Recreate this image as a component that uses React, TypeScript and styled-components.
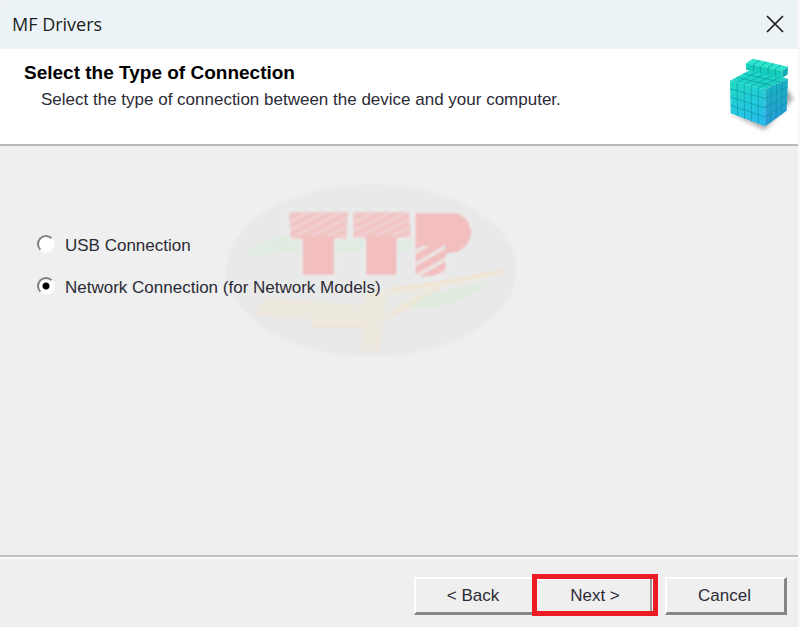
import React, { useState } from "react";
import styled, { createGlobalStyle, css } from "styled-components";

const GlobalStyle = createGlobalStyle`
  *, *::before, *::after { box-sizing: border-box; }
  html, body, #root { height: 100%; margin: 0; }
  body { background: #efefef; }
`;

const uiFont = css`
  font-family: "Liberation Sans", Arial, sans-serif;
  font-size: 17px;
  line-height: 24px;
  color: #2b2b36;
`;

const Dialog = styled.div`
  ${uiFont}
  display: flex;
  flex-direction: column;
  min-height: 100%;
  background: #efefef;
  border-right: 2px solid #f8f8f8;
  border-top-left-radius: 8px;
`;

const TitleBar = styled.header`
  display: flex;
  align-items: center;
  justify-content: space-between;
  height: 49px;
  padding: 0 11px 2px 12px;
  background: #ebf3f7;
  border-top-left-radius: 10px;
`;

const Title = styled.span`
  font-family: "Open Sans", "Noto Sans", sans-serif;
  font-size: 18px;
  color: #1c1c1c;
`;

const CloseButton = styled.button`
  display: flex;
  padding: 2px;
  border: 0;
  background: none;
  color: #1c1c1c;
`;

const Banner = styled.section`
  display: flex;
  justify-content: space-between;
  height: 97px;
  padding: 12px 0 0 24px;
  background: #fff;
  border-bottom: 2px solid #b9b9b9;
`;

const Heading = styled.h1`
  margin: 0;
  font-size: 19px;
  line-height: 24px;
  font-weight: 700;
  color: #000;
`;

const Description = styled.p`
  margin: 3px 0 0 17px;
`;

const ProductIcon = styled.svg`
  flex: none;
  margin-top: -9px;
`;

const Content = styled.main`
  display: grid;
  flex: 1;
  align-content: start;
  padding: 37px 24px 24px 37px;
`;

const Options = styled.fieldset`
  grid-area: 1 / 1;
  z-index: 1;
  display: flex;
  flex-direction: column;
  gap: 18px;
  margin: 0;
  padding: 51px 0 0;
  border: 0;
`;

const Option = styled.label`
  display: flex;
  align-items: center;
  gap: 10px;
`;

const Radio = styled.input`
  appearance: none;
  width: 18px;
  height: 18px;
  margin: 0 0 4px;
  border: 2px solid;
  border-color: #808080 #fcfcfc #fcfcfc #808080;
  border-radius: 50%;
  background: #fff;
  &:checked {
    background: radial-gradient(circle, #000 0 3px, #fff 4px);
  }
`;

const Watermark = styled.svg`
  grid-area: 1 / 1;
  margin-left: 187px;
`;

const Footer = styled.footer`
  display: flex;
  justify-content: flex-end;
  align-items: flex-start;
  height: 72px;
  padding: 20px 11px 0;
  border-top: 2px solid #c2c2c2;
  box-shadow: inset 0 2px #fafafa;
`;

const PushButton = styled.button`
  ${uiFont}
  width: 122px;
  height: 38px;
  padding: 0 2px 0 0;
  border: solid;
  border-width: 2px 3px 3px 2px;
  border-color: #fff #858585 #858585 #fff;
  background: #efefef;
`;

const BackButton = styled(PushButton)`
  width: 118px;
  border-right: 0;
`;

const NextButton = styled(PushButton)`
  width: 126px;
  height: 42px;
  margin: -3px 7px 0 0;
  padding: 2px 0 0;
  border: 5px solid #ed1c24;
  box-shadow: inset -1px 0 #fff, inset -3px 0 #999, inset 0 1px #fff;
`;

function CloseIcon() {
  return (
    <svg width="20" height="20" viewBox="0 0 20 20" fill="none" stroke="currentColor" strokeWidth="1.7">
      <path d="M2 2 18 18M18 2 2 18" />
    </svg>
  );
}

type Point = [number, number];

/* Grid lines inside a four-cornered face, given clockwise from its top-left corner. */
function faceGrid(a: Point, b: Point, c: Point, d: Point, columns: number, rows: number) {
  const at = (u: number, v: number) =>
    [0, 1]
      .map((i) => (1 - v) * ((1 - u) * a[i] + u * b[i]) + v * ((1 - u) * d[i] + u * c[i]))
      .join(",");
  let path = "";
  for (let i = 1; i < columns; i++) path += `M${at(i / columns, 0)}L${at(i / columns, 1)}`;
  for (let i = 1; i < rows; i++) path += `M${at(0, i / rows)}L${at(1, i / rows)}`;
  return path;
}

function CubeIcon() {
  return (
    <ProductIcon width="76" height="84" viewBox="0 0 228 252" aria-hidden="true">
      <defs>
        <linearGradient id="cubeTop" x1="0" y1="0" x2="1" y2="1">
          <stop offset="0" stopColor="#22dccb" />
          <stop offset="1" stopColor="#18cdbe" />
        </linearGradient>
        <linearGradient id="cubeLeft" x1="0" y1="0" x2="0.3" y2="1">
          <stop offset="0" stopColor="#1edcc0" />
          <stop offset="1" stopColor="#27bdea" />
        </linearGradient>
        <linearGradient id="cubeRight" x1="0" y1="0" x2="0.2" y2="1">
          <stop offset="0" stopColor="#16b8be" />
          <stop offset="1" stopColor="#2b98d8" />
        </linearGradient>
        <filter id="cubeShadow" x="-20%" y="-20%" width="140%" height="140%">
          <feGaussianBlur stdDeviation="7" />
        </filter>
      </defs>
      <path d="M22 182 128 234 214 140 196 110 120 200Z" fill="#777" opacity=".6" filter="url(#cubeShadow)" />
      <path d="M24 86 84 54 198 80 130 112Z" fill="url(#cubeTop)" />
      <path d="M24 86 130 112 130 223 26 184Z" fill="url(#cubeLeft)" />
      <path d="M130 112 198 80 194 176 130 223Z" fill="url(#cubeRight)" />
      <g fill="none" stroke="#0c93a4" strokeWidth="3">
        <path opacity=".6" d={faceGrid([84, 54], [198, 80], [130, 112], [24, 86], 5, 3)} />
        <path opacity=".6" d={faceGrid([24, 86], [130, 112], [130, 223], [26, 184], 5, 4)} />
        <path opacity=".7" d={faceGrid([130, 112], [198, 80], [194, 176], [130, 223], 4, 4)} />
      </g>
      <path d="M72 34 92 20 198 44 182 56Z" fill="#2ce4cc" />
      <path d="M72 34 182 56 182 78 72 53Z" fill="#14cdbb" />
      <path d="M182 56 198 44 197 67 182 78Z" fill="#12abb0" />
      <g fill="none" stroke="#0a9ba0" strokeWidth="3" opacity=".7">
        <path d={faceGrid([92, 20], [198, 44], [182, 56], [72, 34], 5, 1)} />
        <path d={faceGrid([72, 34], [182, 56], [182, 78], [72, 53], 5, 1)} />
      </g>
    </ProductIcon>
  );
}

function LogoWatermark() {
  return (
    <Watermark width="300" height="180" viewBox="40 36 900 540" aria-hidden="true">
      <defs>
        <pattern id="stripes" width="44" height="22" patternUnits="userSpaceOnUse" patternTransform="rotate(-27)">
          <rect width="44" height="22" fill="#f2c5c5" />
          <rect width="44" height="5" fill="#eedada" />
        </pattern>
        <pattern id="wideStripes" width="44" height="32" patternUnits="userSpaceOnUse" patternTransform="rotate(-30)">
          <rect width="44" height="32" fill="#f3bebe" />
          <rect width="44" height="11" fill="#ece6e6" />
        </pattern>
        <filter id="soften"><feGaussianBlur stdDeviation="3" /></filter>
      </defs>
      <g filter="url(#soften)">
        <ellipse cx="482" cy="298" rx="436" ry="258" fill="#e9e9e9" />
        <path d="M90 262C140 210 225 178 350 190L600 208 610 238C450 252 250 226 90 262Z" fill="#e0ebe1" />
        <path d="M520 382C620 385 730 350 850 328C780 390 650 435 540 402Z" fill="#dfebdf" />
        <path d="M128 432 164 382 455 402 472 360 535 352 690 330 885 294 888 308 690 348 535 438 514 468 505 542 448 540 462 470 310 468 300 444Z" fill="#eee9de" />
        <path d="M525 372 640 360 522 428Z" fill="#e9e9e9" />
        <path d="M535 355 690 335 885 298M690 348 535 438M310 466 460 464" fill="none" stroke="#f1e1cc" strokeWidth="6" />
        <g stroke="#e9eeee" strokeWidth="12" strokeLinejoin="round">
          <path d="M276 196H370V312H276ZM466 196H558V312H466Z" />
          <path d="M234 122H412L408 204H240ZM426 122H596L602 200H428Z" />
          <path d="M614 126H742L770 146 784 184 772 218 744 242 708 250 704 312 614 318Z" />
        </g>
        <path d="M234 122H412L408 204H240Z" fill="url(#stripes)" />
        <path d="M426 122H596L602 200H428Z" fill="url(#stripes)" />
        <path d="M276 196H370V312H276ZM466 196H558V312H466Z" fill="#f3bebe" />
        <path d="M614 220H708L704 312 614 318Z" fill="url(#wideStripes)" />
        <path d="M614 126H742L770 146 784 184 772 218 744 242 704 248 708 222 614 226Z" fill="#f3bebe" />
      </g>
    </Watermark>
  );
}

export default function App() {
  const [connection, setConnection] = useState("network");
  return (
    <>
      <GlobalStyle />
      <Dialog>
        <TitleBar>
          <Title>MF Drivers</Title>
          <CloseButton type="button" aria-label="Close"><CloseIcon /></CloseButton>
        </TitleBar>
        <Banner>
          <div>
            <Heading>Select the Type of Connection</Heading>
            <Description>Select the type of connection between the device and your computer.</Description>
          </div>
          <CubeIcon />
        </Banner>
        <Content>
          <LogoWatermark />
          <Options aria-label="Connection type">
            <Option>
              <Radio type="radio" name="connection" checked={connection === "usb"} onChange={() => setConnection("usb")} />
              USB Connection
            </Option>
            <Option>
              <Radio type="radio" name="connection" checked={connection === "network"} onChange={() => setConnection("network")} />
              Network Connection (for Network Models)
            </Option>
          </Options>
        </Content>
        <Footer>
          <BackButton type="button">&lt; Back</BackButton>
          <NextButton type="button">Next &gt;</NextButton>
          <PushButton type="button">Cancel</PushButton>
        </Footer>
      </Dialog>
    </>
  );
}
